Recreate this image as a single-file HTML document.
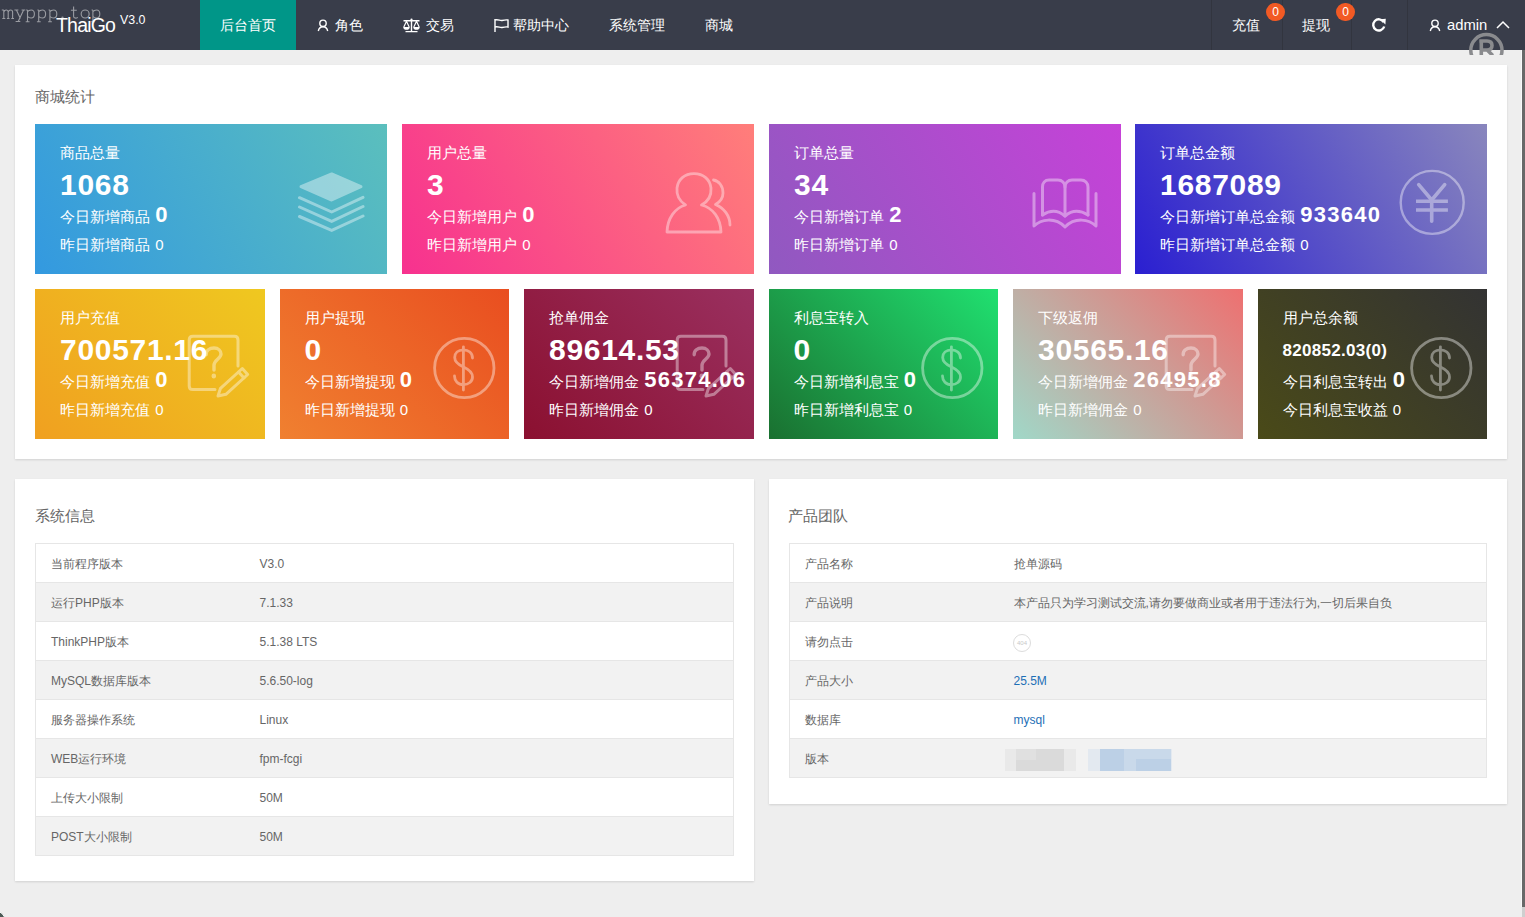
<!DOCTYPE html>
<html><head><meta charset="utf-8"><style>
*{margin:0;padding:0;box-sizing:border-box}
html,body{width:1525px;height:917px;overflow:hidden}
body{background:#eeeeee;font-family:"Liberation Sans",sans-serif;position:relative;color:#666}
.abs{position:absolute}
#hdr{left:0;top:0;width:1525px;height:50px;background:#393d4a}
.wm{left:2px;top:2.5px;font-family:"Liberation Mono",monospace;font-size:18.5px;color:#85878d;}
.logo{left:56px;top:14px;font-size:19.5px;color:#fff;letter-spacing:-0.8px}
.ver{left:120px;top:13px;font-size:12.4px;color:#fff}
.nav{top:0;height:50px;line-height:50px;font-size:14px;color:#fff;white-space:nowrap;font-weight:500}
.act{left:200px;width:96px;background:#009688;text-align:center}
.sep{top:0;width:1px;height:50px;background:#32353f}
.badge{width:19px;height:18px;border-radius:9px;background:#f25a24;color:#fff;font-size:12px;line-height:18px;text-align:center}
.panel{background:#fff;box-shadow:0 1px 2px rgba(0,0,0,.12)}
.ptitle{font-size:14.5px;color:#666;line-height:20px}
.card{color:#fff;overflow:hidden;font-weight:500}
.card .t{position:absolute;left:25px;top:19px;font-size:15px;line-height:20px}
.card .n{position:absolute;left:25px;top:44px;font-size:30px;font-weight:bold;line-height:34px;letter-spacing:0.7px}
.card .l1{position:absolute;left:25px;top:80px;font-size:15px;line-height:22px}
.card .l1 b{font-size:22px;letter-spacing:1.3px;margin-left:1px}
.card .l2{position:absolute;left:25px;top:111px;font-size:15px;line-height:20px}
.card .l2 span{margin-left:1px}
.tbl{border:1px solid #e6e6e6;border-collapse:collapse}
.tbl td{height:39px;border-top:1px solid #e6e6e6;font-size:12px;color:#666;padding:2px 15px 0}
.tbl tr:nth-child(even) td{background:#f2f2f2}
.lnk{color:#1e6fb6}
</style></head><body>
<div id="hdr" class="abs">
  <svg class="abs" style="left:0;top:0.7px" width="110" height="24" viewBox="0 0 110 24"><g fill="none" stroke="#9a9ca2" stroke-width="1.1"><path d="M3.8,9 V17.5 M1.8,9 H3.8 M3.8,11 C4.4,9.6 5.2,9 6.1,9 C7.3,9 8.2,9.8 8.2,11 V17.5 M8.2,11 C8.8,9.6 9.6,9 10.5,9 C11.7,9 12.6,9.8 12.6,11 V17.5 M2.3,17.5 H5.3 M6.9,17.5 H9.5 M11.3,17.5 H14 M14.4,9 H18.4 M21.6,9 H25.3 M16.4,9 L20.4,17.5 M23.6,9 L18.2,20.5 M15.6,20.5 H20.3 M26.2,9 H27.5 M27.5,9 V20.7 M25.7,20.7 H29.5 M27.5,10.8 C28.5,9.4 30.0,9 31.1,9 C33.1,9 34.4,10.8 34.4,13 C34.4,15.3 33.1,17 31.1,17 C30.0,17 28.5,16.6 27.5,15.2 M37.4,9 H38.7 M38.7,9 V20.7 M36.9,20.7 H40.7 M38.7,10.8 C39.7,9.4 41.2,9 42.3,9 C44.3,9 45.6,10.8 45.6,13 C45.6,15.3 44.3,17 42.3,17 C41.2,17 39.7,16.6 38.7,15.2 M48.6,9 H49.9 M49.9,9 V20.7 M48.1,20.7 H51.9 M49.9,10.8 C50.9,9.4 52.4,9 53.5,9 C55.5,9 56.8,10.8 56.8,13 C56.8,15.3 55.5,17 53.5,17 C52.4,17 50.9,16.6 49.9,15.2 M91.6,9 H92.9 M92.9,9 V20.7 M91.1,20.7 H94.9 M92.9,10.8 C93.9,9.4 95.4,9 96.5,9 C98.5,9 99.8,10.8 99.8,13 C99.8,15.3 98.5,17 96.5,17 C95.4,17 93.9,16.6 92.9,15.2 M73.6,5.5 V15.5 C73.6,16.6 74.5,17.1 75.6,17.1 C76.5,17.1 77.2,16.8 77.8,16.3 M70.9,9.3 H76.8 "/><ellipse cx="85.15" cy="13" rx="4" ry="3.95"/><circle cx="62.5" cy="16.6" r=".6"/></g></svg>
  <div class="abs logo">ThaiGo</div>
  <div class="abs ver">V3.0</div>
  <div class="abs nav act">后台首页</div>
  <div class="abs nav" style="left:335px">角色</div>
  <div class="abs nav" style="left:426px">交易</div>
  <div class="abs nav" style="left:513px">帮助中心</div>
  <div class="abs nav" style="left:609px">系统管理</div>
  <div class="abs nav" style="left:705px">商城</div>
  <div class="abs sep" style="left:1211px"></div>
  <div class="abs sep" style="left:1282px"></div>
  <div class="abs sep" style="left:1351px"></div>
  <div class="abs sep" style="left:1407px"></div>
  <div class="abs nav" style="left:1232px">充值</div>
  <div class="abs badge" style="left:1266px;top:2.5px">0</div>
  <div class="abs nav" style="left:1302px">提现</div>
  <div class="abs badge" style="left:1336px;top:2.5px">0</div>
  <div class="abs nav" style="left:1447px;font-size:14.8px">admin</div>
  <svg class="abs" style="left:317px;top:18px" width="13" height="14" viewBox="0 0 13 14"><g fill="none" stroke="#fff" stroke-width="1.4"><circle cx="6" cy="5.3" r="3.2"/><path d="M1.3,13 C1.8,10.4 3.6,8.7 6,8.7 C8.4,8.7 10.2,10.4 10.7,13"/></g></svg>
  <svg class="abs" style="left:402px;top:18px" width="20" height="16" viewBox="0 0 20 16"><g fill="none" stroke="#fff" stroke-width="1.2"><circle cx="9.5" cy="1.6" r="1.1" fill="#fff" stroke="none"/><path d="M1.5,2.8 H17.5 M9.5,2.8 V13.5 M3.5,13.6 H15.5" stroke-width="1.4"/><path d="M4.5,3.2 L1.8,9 M4.5,3.2 L7.2,9 M14.5,3.2 L11.8,9 M14.5,3.2 L17.2,9"/><path d="M1.2,9 H7.8 C7.8,11 6.2,11.8 4.5,11.8 C2.8,11.8 1.2,11 1.2,9 Z M11.2,9 H17.8 C17.8,11 16.2,11.8 14.5,11.8 C12.8,11.8 11.2,11 11.2,9 Z" fill="#fff" stroke="none"/></g></svg>
  <svg class="abs" style="left:493px;top:18px" width="17" height="15" viewBox="0 0 17 15"><g fill="none" stroke="#fff" stroke-width="1.4"><path d="M2,1 V14"/><path d="M2,2 C5,1 7,3 9,2.5 C11,2 13,1.5 15,2 V9 C13,8.5 11,9 9,9.5 C7,10 5,8 2,9"/></g></svg>
  <svg class="abs" style="left:1371px;top:17px" width="16" height="16" viewBox="0 0 16 16"><g fill="none" stroke="#fff" stroke-width="2.4"><path d="M12.6,5 A5.6,5.6 0 1 0 13.2,9.5"/></g><path d="M9.2,2.2 L14.8,1.8 L14.4,7.6 Z" fill="#fff"/></svg>
  <svg class="abs" style="left:1429px;top:18px" width="13" height="14" viewBox="0 0 13 14"><g fill="none" stroke="#fff" stroke-width="1.4"><circle cx="6" cy="5.3" r="3.2"/><path d="M1.3,13 C1.8,10.4 3.6,8.7 6,8.7 C8.4,8.7 10.2,10.4 10.7,13"/></g></svg>
  <svg class="abs" style="left:1495px;top:19px" width="16" height="12" viewBox="0 0 16 12"><path d="M2,9 L8,3 L14,9" fill="none" stroke="#fff" stroke-width="1.5"/></svg>
  </div>
<div class="abs panel" style="left:15px;top:65px;width:1492px;height:394px"><div class="abs ptitle" style="left:20px;top:22px">商城统计</div></div>
<div class="abs card" style="left:35px;top:124px;width:352px;height:150px;background:linear-gradient(60deg,#3399e0,#5bbfbd)"><div class="t">商品总量</div><div class="n">1068</div><div class="l1">今日新增商品 <b>0</b></div><div class="l2">昨日新增商品 <span>0</span></div></div>
<div class="abs card" style="left:402px;top:124px;width:352px;height:150px;background:linear-gradient(60deg,#f7318f,#ff7e7a)"><div class="t">用户总量</div><div class="n">3</div><div class="l1">今日新增用户 <b>0</b></div><div class="l2">昨日新增用户 <span>0</span></div></div>
<div class="abs card" style="left:769px;top:124px;width:352px;height:150px;background:linear-gradient(60deg,#9059c0,#c642d8)"><div class="t">订单总量</div><div class="n">34</div><div class="l1">今日新增订单 <b>2</b></div><div class="l2">昨日新增订单 <span>0</span></div></div>
<div class="abs card" style="left:1135px;top:124px;width:352px;height:150px;background:linear-gradient(60deg,#2a1fd1,#8986bd)"><div class="t">订单总金额</div><div class="n">1687089</div><div class="l1">今日新增订单总金额 <b>933640</b></div><div class="l2">昨日新增订单总金额 <span>0</span></div></div>
<div class="abs card" style="left:35px;top:289px;width:229.5px;height:150px;background:linear-gradient(45deg,#f0a020,#efc820)"><div class="t">用户充值</div><div class="n">700571.16</div><div class="l1">今日新增充值 <b>0</b></div><div class="l2">昨日新增充值 <span>0</span></div></div>
<div class="abs card" style="left:279.5px;top:289px;width:229.5px;height:150px;background:linear-gradient(45deg,#f08030,#e94e20)"><div class="t">用户提现</div><div class="n">0</div><div class="l1">今日新增提现 <b>0</b></div><div class="l2">昨日新增提现 <span>0</span></div></div>
<div class="abs card" style="left:524px;top:289px;width:229.5px;height:150px;background:linear-gradient(45deg,#8b1030,#9a3060)"><div class="t">抢单佣金</div><div class="n">89614.53</div><div class="l1">今日新增佣金 <b>56374.06</b></div><div class="l2">昨日新增佣金 <span>0</span></div></div>
<div class="abs card" style="left:768.5px;top:289px;width:229.5px;height:150px;background:linear-gradient(45deg,#1a7030,#20e070)"><div class="t">利息宝转入</div><div class="n">0</div><div class="l1">今日新增利息宝 <b>0</b></div><div class="l2">昨日新增利息宝 <span>0</span></div></div>
<div class="abs card" style="left:1013px;top:289px;width:229.5px;height:150px;background:linear-gradient(45deg,#a0d8c8,#ee7070)"><div class="t">下级返佣</div><div class="n">30565.16</div><div class="l1">今日新增佣金 <b>26495.8</b></div><div class="l2">昨日新增佣金 <span>0</span></div></div>
<div class="abs card" style="left:1257.5px;top:289px;width:229.5px;height:150px;background:linear-gradient(45deg,#4a4a18,#333333)"><div class="t">用户总余额</div><div class="n" style="font-size:17px;top:45px;letter-spacing:0.3px">820852.03(0)</div><div class="l1">今日利息宝转出 <b>0</b></div><div class="l2">今日利息宝收益 <span>0</span></div></div>

<svg class="abs" style="left:290px;top:165px" width="80" height="75" viewBox="0 0 80 75"><g opacity=".4" fill="none" stroke="#fff" stroke-width="3" stroke-linecap="round" stroke-linejoin="round"><path d="M11,21.7 L41.7,9 L71,21.7 L41.7,35 Z" fill="#fff"/><path d="M9.5,32.7 L41.7,47 L73,32.3"/><path d="M9.5,42 L41.7,56.4 L73,41.5"/><path d="M9.5,51.5 L41.7,65.4 L73,51"/></g></svg><svg class="abs" style="left:655px;top:165px" width="80" height="75" viewBox="0 0 80 75"><g opacity=".4" fill="none" stroke="#fff" stroke-width="2.8" stroke-linecap="round" stroke-linejoin="round"><path d="M30.5,40 C23,35 21.5,28 22,23 C23,14.5 29.5,8.7 39,8.7 C48.5,8.7 55,14.5 56,23 C56.5,30 54,36 46.5,40 C58,43 65.5,53 66,67 L12,67 C12.5,53 20,43 30.5,40 Z"/><path d="M58.5,15 C64,16 68,21 68,28 C68,33 65,37 60.5,39.5 C69,43 75,51 75,60"/></g></svg><svg class="abs" style="left:1025px;top:165px" width="80" height="75" viewBox="0 0 80 75"><g opacity=".4" fill="none" stroke="#fff" stroke-width="3" stroke-linecap="round" stroke-linejoin="round"><path d="M9,28.5 V61 C16,54 30,52 40,62 C50,52 64,54 71,61 V28.5"/><path d="M17.5,50 V22 C17.5,18 20,15 24,15 H33 C37,15 40,18 40,22 V51"/><path d="M40,22 C40,18 43,15 47,15 H56 C60,15 63,18 63,22 V50"/><path d="M17.5,50 C25,45 33,45 40,51 C47,45 55,45 63,50"/></g></svg><svg class="abs" style="left:1390px;top:160px" width="85" height="85" viewBox="0 0 85 85"><g opacity=".4" fill="none" stroke="#fff" stroke-linecap="round"><circle cx="42.2" cy="42.4" r="31.5" stroke-width="2.4"/><path d="M28.7,24.6 L41.7,40 L54.7,24.6 M41.7,40 V61.2" stroke-width="3.6" stroke-linecap="round" stroke-linejoin="round"/><path d="M26,41.2 H57.9 M26,50 H57.9" stroke-width="3.6" stroke-linecap="butt"/></g></svg>
<svg class="abs" style="left:180px;top:325px" width="80" height="80" viewBox="0 0 80 80"><g opacity=".4" fill="none" stroke="#fff" stroke-width="3" stroke-linecap="round" stroke-linejoin="round"><path d="M58,41 V15 C58,12.8 56.5,11.3 54.3,11.3 H12.9 C10.7,11.3 9.2,12.8 9.2,15 V60.9 C9.2,63.1 10.7,64.6 12.9,64.6 H35"/><path d="M26.2,29.7 C26,25.5 29.5,23 34,23 C38.5,23 41,26 41,29 C41,33.5 34,35 34,40 V45" stroke-width="3.4"/><path d="M33.8,50.6 V51.2" stroke-width="4.4"/><path d="M38,71 L40.5,63.3 L62.3,43.5 L67.7,49.5 L45.9,69.3 Z"/><path d="M58.5,47 L64,53"/></g></svg><svg class="abs" style="left:425px;top:328px" width="80" height="80" viewBox="0 0 80 80"><g opacity=".4" fill="none" stroke="#fff" stroke-width="2.8" stroke-linecap="round"><circle cx="39.3" cy="40" r="29.7"/><path d="M38.4,18.8 V62"/><path d="M47.5,30 C47.5,25 43.5,21.8 38.5,21.8 C33,21.8 29.7,25 29.7,29.5 C29.7,34 33,36.5 38.5,39 C44,41.5 47.5,44 47.5,49 C47.5,53.5 43.5,56.7 38.5,56.7 C33,56.7 29.5,53 29.5,48"/></g></svg><svg class="abs" style="left:668px;top:325px" width="80" height="80" viewBox="0 0 80 80"><g opacity=".4" fill="none" stroke="#fff" stroke-width="3" stroke-linecap="round" stroke-linejoin="round"><path d="M58,41 V15 C58,12.8 56.5,11.3 54.3,11.3 H12.9 C10.7,11.3 9.2,12.8 9.2,15 V60.9 C9.2,63.1 10.7,64.6 12.9,64.6 H35"/><path d="M26.2,29.7 C26,25.5 29.5,23 34,23 C38.5,23 41,26 41,29 C41,33.5 34,35 34,40 V45" stroke-width="3.4"/><path d="M33.8,50.6 V51.2" stroke-width="4.4"/><path d="M38,71 L40.5,63.3 L62.3,43.5 L67.7,49.5 L45.9,69.3 Z"/><path d="M58.5,47 L64,53"/></g></svg><svg class="abs" style="left:913px;top:328px" width="80" height="80" viewBox="0 0 80 80"><g opacity=".4" fill="none" stroke="#fff" stroke-width="2.8" stroke-linecap="round"><circle cx="39.3" cy="40" r="29.7"/><path d="M38.4,18.8 V62"/><path d="M47.5,30 C47.5,25 43.5,21.8 38.5,21.8 C33,21.8 29.7,25 29.7,29.5 C29.7,34 33,36.5 38.5,39 C44,41.5 47.5,44 47.5,49 C47.5,53.5 43.5,56.7 38.5,56.7 C33,56.7 29.5,53 29.5,48"/></g></svg><svg class="abs" style="left:1157px;top:325px" width="80" height="80" viewBox="0 0 80 80"><g opacity=".4" fill="none" stroke="#fff" stroke-width="3" stroke-linecap="round" stroke-linejoin="round"><path d="M58,41 V15 C58,12.8 56.5,11.3 54.3,11.3 H12.9 C10.7,11.3 9.2,12.8 9.2,15 V60.9 C9.2,63.1 10.7,64.6 12.9,64.6 H35"/><path d="M26.2,29.7 C26,25.5 29.5,23 34,23 C38.5,23 41,26 41,29 C41,33.5 34,35 34,40 V45" stroke-width="3.4"/><path d="M33.8,50.6 V51.2" stroke-width="4.4"/><path d="M38,71 L40.5,63.3 L62.3,43.5 L67.7,49.5 L45.9,69.3 Z"/><path d="M58.5,47 L64,53"/></g></svg><svg class="abs" style="left:1402px;top:328px" width="80" height="80" viewBox="0 0 80 80"><g opacity=".4" fill="none" stroke="#fff" stroke-width="2.8" stroke-linecap="round"><circle cx="39.3" cy="40" r="29.7"/><path d="M38.4,18.8 V62"/><path d="M47.5,30 C47.5,25 43.5,21.8 38.5,21.8 C33,21.8 29.7,25 29.7,29.5 C29.7,34 33,36.5 38.5,39 C44,41.5 47.5,44 47.5,49 C47.5,53.5 43.5,56.7 38.5,56.7 C33,56.7 29.5,53 29.5,48"/></g></svg>
<div class="abs panel" style="left:15px;top:479px;width:739px;height:402px"><div class="abs ptitle" style="left:20px;top:27px">系统信息</div><table class="abs tbl" style="left:20px;top:64px;width:699px"><colgroup><col style="width:209px"><col></colgroup><tr><td>当前程序版本</td><td>V3.0</td></tr><tr><td>运行PHP版本</td><td>7.1.33</td></tr><tr><td>ThinkPHP版本</td><td>5.1.38 LTS</td></tr><tr><td>MySQL数据库版本</td><td>5.6.50-log</td></tr><tr><td>服务器操作系统</td><td>Linux</td></tr><tr><td>WEB运行环境</td><td>fpm-fcgi</td></tr><tr><td>上传大小限制</td><td>50M</td></tr><tr><td>POST大小限制</td><td>50M</td></tr></table></div>
<div class="abs panel" style="left:769px;top:479px;width:738px;height:325px"><div class="abs ptitle" style="left:19px;top:27px">产品团队</div><table class="abs tbl" style="left:20px;top:64px;width:698px"><colgroup><col style="width:209px"><col></colgroup><tr><td>产品名称</td><td>抢单源码</td></tr><tr><td>产品说明</td><td>本产品只为学习测试交流,请勿要做商业或者用于违法行为,一切后果自负</td></tr><tr><td>请勿点击</td><td><svg width="20" height="20" viewBox="0 0 20 20" style="vertical-align:middle;margin-top:2px;margin-left:-2px"><circle cx="10" cy="10" r="8.5" fill="#fff" stroke="#dcdcdc" stroke-width="1"/><text x="10" y="12.2" font-size="6" text-anchor="middle" fill="#c8c8c8" font-family="Liberation Sans">404</text></svg></td></tr><tr><td>产品大小</td><td><span class="lnk">25.5M</span></td></tr><tr><td>数据库</td><td><span class="lnk">mysql</span></td></tr><tr><td>版本</td><td></td></tr></table></div>
<div class="abs" style="left:1005px;top:749px;width:71px;height:22px;background:#e9e9e9"></div>
<div class="abs" style="left:1016px;top:749px;width:48px;height:22px;background:#dadada"></div>
<div class="abs" style="left:1016px;top:749px;width:20px;height:11px;background:#e0e0e0"></div>
<div class="abs" style="left:1088px;top:749px;width:84px;height:22px;background:#e3e9f0"></div>
<div class="abs" style="left:1100px;top:749px;width:71px;height:22px;background:#c9d9ea"></div>
<div class="abs" style="left:1100px;top:749px;width:24px;height:22px;background:#bcd0e6"></div>
<div class="abs" style="left:1136px;top:759px;width:35px;height:12px;background:#bcd0e6"></div>
<svg class="abs" style="left:1464px;top:30px" width="46" height="25" viewBox="0 0 46 25"><g fill="none" stroke="#8a8b8e" stroke-width="3.5"><circle cx="22.4" cy="20.2" r="15.6"/></g><path d="M17.3,10 V25 M15.3,11 H23 C26.4,11 28,13 28,15.6 C28,18.2 26.4,20 23,20 H17.3 M23.2,20 L28.8,25.5" fill="none" stroke="#8a8b8e" stroke-width="3.6"/></svg>
<div class="abs" style="left:1521px;top:50px;width:1px;height:857px;background:#f8f8f8"></div>
<div class="abs" style="left:1522px;top:50px;width:3px;height:857px;background:#686868"></div>
<div class="abs" style="left:1522px;top:907px;width:3px;height:10px;background:#cfcfcf"></div>
<div class="abs" style="left:-17.5px;top:909.5px;width:23px;height:23px;border-radius:50%;background:#4c5a55;border:1.5px solid #f6f8f8"></div>
</body></html>
